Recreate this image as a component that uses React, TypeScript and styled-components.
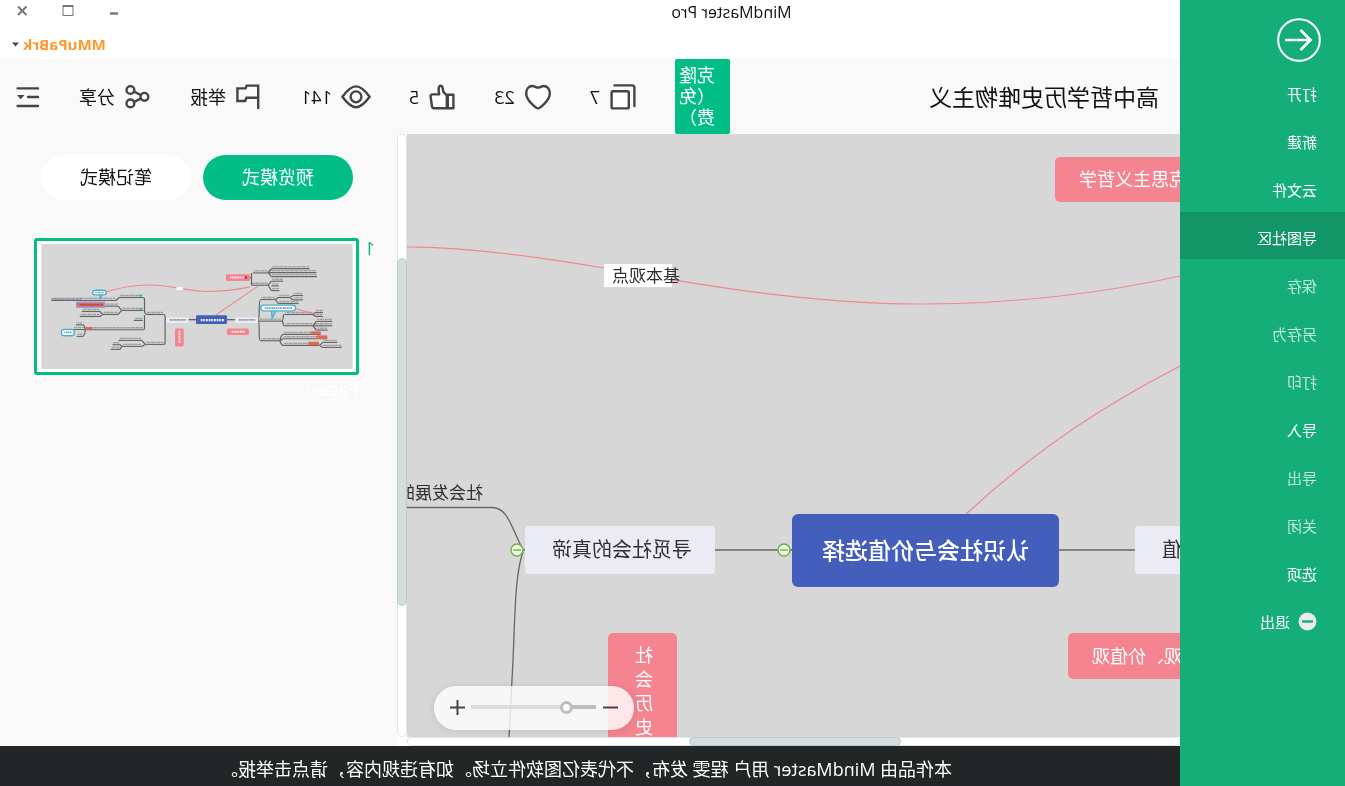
import React from 'react';
import styled, { createGlobalStyle, css } from 'styled-components';

const GlobalStyle = createGlobalStyle`
  * { box-sizing: border-box; }
  html, body { margin: 0; padding: 0; overflow-x: hidden; }
  body {
    font-family: "Open Sans", "Noto Sans CJK SC", sans-serif;
    font-size: 18px;
    color: #111;
    background: #fff;
    text-spacing-trim: space-all;
  }
  button { font: inherit; color: inherit; border: 0; padding: 0; background: none; cursor: pointer; }
  h1, h2, p, ul { margin: 0; padding: 0; font-weight: 400; }
  svg { display: block; flex: none; }
`;

/* The window is shown flipped left to right. */
const Window = styled.div`
  display: grid;
  grid-template-columns: 165px minmax(0, 1fr);
  min-height: 100vh;
  transform: scaleX(-1);
`;

const Sidebar = styled.nav`
  display: flex;
  flex-direction: column;
  background: #15ae79;
  color: #fff;
`;

const BackButton = styled.button`
  width: 44px;
  height: 44px;
  margin: 18px 0 6px 24px;
`;

const MenuItem = styled.button<{ $active?: boolean; $muted?: boolean }>`
  display: flex;
  align-items: center;
  gap: 8px;
  height: 47px;
  margin-bottom: 1px;
  padding: 4px 0 0 28px;
  font-size: 15px;
  text-align: left;
  color: ${(p) => (p.$muted ? 'rgba(255, 255, 255, 0.72)' : '#fff')};
  background: ${(p) => (p.$active ? '#129667' : 'transparent')};
`;

const Column = styled.div`
  display: flex;
  flex-direction: column;
  min-width: 0;
`;

const TitleBar = styled.header`
  display: flex;
  height: 59px;
  background: #fff;
`;

const AppName = styled.h1`
  flex: 1;
  padding-top: 1px;
  font-size: 16px;
  line-height: 22px;
  text-align: center;
`;

const WindowSide = styled.div`
  display: flex;
  flex-direction: column;
  align-items: flex-end;
  justify-content: space-between;
  width: 283px;
  padding: 3px 12px 5px 0;
`;

const WindowControls = styled.div`
  display: flex;
  gap: 30px;
  padding-right: 2px;
`;

const UserButton = styled.button`
  display: flex;
  align-items: center;
  gap: 4px;
  font-size: 15px;
  font-weight: 700;
  line-height: 20px;
  color: #ff9a2e;
`;

const Toolbar = styled.div`
  display: flex;
  align-items: center;
  gap: 38px;
  height: 75px;
  padding: 0 13px 0 21px;
  background: #f9f9f9;
`;

const DocTitle = styled.h2`
  flex: 1;
  font-size: 23px;
  line-height: 32px;
  white-space: nowrap;
`;

const CloneButton = styled.button`
  align-self: stretch;
  width: 55px;
  padding: 0 4px 0 15px;
  border-radius: 2px;
  background: #02be86;
  color: #fff;
  line-height: 21px;
  text-align: left;
`;

const Stat = styled.button`
  display: flex;
  align-items: center;
  gap: 9px;
  line-height: 26px;
  white-space: nowrap;
`;

const Workspace = styled.div`
  flex: 1;
  display: grid;
  grid-template-columns: minmax(0, 1fr) 10px 397px;
  grid-template-rows: minmax(0, 1fr) 9px;
  background: #fff;
`;

const Canvas = styled.main`
  position: relative;
  overflow: hidden;
  background: #d7d7d7;
  color: #303030;
`;

const Links = styled.svg`
  position: absolute;
  left: 0;
  top: 0;
  fill: none;
`;

type Tone = 'root' | 'plain' | 'pink';
const tones = {
  root: css`background: #435fbb; color: #fff; font-size: 23px; font-weight: 500; border-radius: 6px;`,
  plain: css`background: #eaebf4; color: #303030; font-size: 20px; border-radius: 4px; padding-right: 4px;`,
  pink: css`background: #f48590; color: #fff; font-size: 18px; border-radius: 5px;`,
};

const Node = styled.div<{ $x: number; $y: number; $w: number; $h: number; $tone: Tone }>`
  position: absolute;
  left: ${(p) => p.$x}px;
  top: ${(p) => p.$y}px;
  width: ${(p) => p.$w}px;
  height: ${(p) => p.$h}px;
  display: flex;
  align-items: center;
  justify-content: center;
  padding-bottom: 3px;
  white-space: nowrap;
  ${(p) => tones[p.$tone]}
`;

const TallNode = styled(Node)`
  align-items: flex-start;
  padding: 10px 24px 0;
  line-height: 24px;
  white-space: normal;
`;

const LinkLabel = styled.div`
  position: absolute;
  left: 508px;
  top: 130px;
  width: 68px;
  height: 23px;
  background: #fff;
  font-size: 17px;
  line-height: 24px;
  white-space: nowrap;
  direction: rtl;
  padding-right: 8px;
`;

const BranchLabel = styled.div`
  position: absolute;
  left: 697px;
  top: 347px;
  font-size: 17px;
  line-height: 24px;
  white-space: nowrap;
`;

const ZoomBar = styled.div`
  position: absolute;
  right: 27px;
  bottom: 7px;
  display: flex;
  align-items: center;
  justify-content: space-between;
  width: 200px;
  height: 44px;
  padding: 0 16px 2px;
  border-radius: 22px;
  background: rgba(255, 255, 255, 0.8);
  box-shadow: 0 1px 8px rgba(0, 0, 0, 0.1);
`;

const ZoomRange = styled.input`
  appearance: none;
  width: 125px;
  height: 14px;
  margin: 0;
  background: linear-gradient(90deg, #bdbdbd 24%, #dcdcdc 24%) center / 100% 4px no-repeat;
  &::-webkit-slider-thumb {
    appearance: none;
    width: 13px;
    height: 13px;
    border: 3px solid #bdbdbd;
    border-radius: 50%;
    background: #fff;
  }
`;

const Track = styled.div<{ $vertical?: boolean }>`
  display: flex;
  flex-direction: ${(p) => (p.$vertical ? 'column' : 'row')};
  border-radius: 5px;
  background: #fff;
  box-shadow: inset 0 0 0 1px #e3e3e3;
`;

const Space = styled.span<{ $grow: number }>`
  flex: ${(p) => p.$grow} 0 0;
`;

const Thumb = styled(Space)`
  border: 1px solid #bccaca;
  border-radius: 5px;
  background: #d4dede;
`;

const Panel = styled.aside`
  grid-column: 3;
  grid-row: 1 / span 2;
  padding: 21px 34px 0 22px;
  background: #f9f9f9;
`;

const Modes = styled.div`
  display: flex;
  gap: 12px;
  padding-left: 22px;
`;

const ModeButton = styled.button<{ $on?: boolean }>`
  width: 150px;
  height: 45px;
  border-radius: 23px;
  line-height: 45px;
  background: ${(p) => (p.$on ? '#02be86' : '#fff')};
  color: ${(p) => (p.$on ? '#fff' : '#111')};
`;

const PageRow = styled.div`
  display: grid;
  grid-template-columns: 16px 325px;
  margin-top: 38px;
`;

const PageNumber = styled.span`
  color: #15ae79;
  line-height: 20px;
`;

const PageFrame = styled.button`
  display: flex;
  border: 3px solid #02be86;
  border-radius: 3px;
  padding: 3px 4px 3px 3px;
  background: #fff;
`;

const PageName = styled.span`
  grid-column: 2;
  padding-top: 1px;
  line-height: 26px;
  color: #fff;
`;

const Notice = styled.footer`
  display: flex;
  align-items: center;
  justify-content: center;
  height: 40px;
  padding: 6px 0 0 8px;
  background: #222627;
  color: #fff;
  font-size: 18px;
  line-height: 24px;
`;

const ink = { fill: 'none', stroke: '#444', strokeWidth: 2.4, strokeLinejoin: 'round' as const, strokeLinecap: 'round' as const };

const CopyIcon = () => (
  <svg width="28" height="28" {...ink}>
    <rect x="8.2" y="8.2" width="17.2" height="17.2" rx="1.5" fill="#fff" />
    <path d="M22.5 2.4H5Q2.6 2.4 2.6 4.8V23" />
  </svg>
);
const HeartIcon = () => (
  <svg width="28" height="28" {...ink}>
    <path fill="#fff" d="M14 25.4C12.6 25.4 2.2 17.6 2.2 10.4C2.2 6 4.8 3 8.4 3C10.4 3 12 4.6 14 4.6S17.6 3 19.6 3C23.2 3 25.8 6 25.8 10.4C25.8 17.6 15.4 25.4 14 25.4Z" />
  </svg>
);
const LikeIcon = () => (
  <svg width="28" height="28" {...ink}>
    <rect x="2.6" y="11.8" width="5.6" height="13.4" fill="#fff" />
    <path fill="#fff" d="M9.2 12.4L12.4 9.2C13.4 8 12.6 2.8 15.2 2.8C18 2.8 17.6 8 16.8 11.4H23.4Q25.6 11.4 25.4 13.6L24 23.6Q23.6 25.2 22 25.2H9.2Z" />
  </svg>
);
const EyeIcon = () => (
  <svg width="30" height="28" {...ink}>
    <path d="M1.4 13.8C7 6 10.6 3.4 15 3.4S23 6 28.6 13.8C23 21.6 19.4 24.2 15 24.2S7 21.6 1.4 13.8Z" />
    <circle cx="15" cy="13.8" r="5.4" />
  </svg>
);
const FlagIcon = () => (
  <svg width="28" height="28" {...ink} strokeLinejoin="miter" strokeLinecap="butt">
    <path d="M4.8 26V2.6H16.4L17.400 5.4H25.6V18H17.800L16.600 14.8H4.8" />
  </svg>
);
const ShareIcon = () => (
  <svg width="28" height="28" {...ink}>
    <circle cx="7.6" cy="13.8" r="3.9" />
    <circle cx="21.6" cy="7" r="3.9" />
    <circle cx="21.6" cy="20.4" r="3.9" />
    <path d="M11.2 12L18 8.6M11.2 15.6L18 18.8" />
  </svg>
);
const MenuIcon = () => (
  <svg width="28" height="28" {...ink}>
    <path d="M3 5.4H23.4M3 14H13M3 23H23.4" />
    <path d="M16.500 12H24L20.300 16.200Z" fill="#444" stroke="none" />
  </svg>
);

const Collapse = ({ x, y }: { x: number; y: number }) => (
  <g stroke="#6cb33f" strokeWidth="1.4">
    <circle cx={x} cy={y} r="6" fill="#eef8e8" />
    <path d={`M${x - 4} ${y}h8`} />
  </g>
);

/* Page preview: boxes are [x, y, width, height], branches are [x1, x2, y]. */
const branches = [
  [254, 300, 87], [129, 244, 74], [109, 254, 86], [107, 244, 98],
  [254, 304, 124], [209, 244, 112], [222, 244, 126], [220, 244, 140],
  [568, 621, 212], [630, 702, 161], [629, 695, 200], [631, 658, 230], [629, 804, 258],
  [712, 906, 170], [705, 746, 187], [705, 752, 212], [760, 815, 203], [760, 821, 218],
  [812, 832, 243], [804, 840, 257], [812, 830, 278],
  [568, 624, 302], [634, 704, 290], [634, 694, 308], [700, 722, 303], [700, 728, 317],
  [232, 276, 167], [214, 284, 232], [219, 276, 291], [189, 224, 161], [149, 179, 155],
  [149, 179, 168], [162, 224, 179], [119, 204, 212], [119, 204, 246], [89, 112, 206],
  [89, 112, 218], [61, 109, 233], [61, 119, 246], [75, 109, 259], [96, 209, 272],
  [76, 209, 285], [99, 209, 305], [46, 90, 296], [32, 92, 311],
];
const twigs =
  'M308 101H304M304 87V124M254 86L244 74M254 86L244 98M254 124L244 112M254 124L244 140' +
  'M561 228Q564 228 564 222Q564 212 568 212M564 224V294Q564 302 568 302' +
  'M621 212Q626 208 626 200V168Q626 161 630 161M626 214V250Q626 258 629 258' +
  'M702 161L712 170M695 200L705 187M695 200L705 212M752 212L760 203M752 212L760 218' +
  'M804 257Q806 243 812 243M804 257Q806 278 812 278M624 302L634 290M624 302L634 308M694 308L700 303M694 308L700 317' +
  'M284 228Q281 226 281 200Q281 167 276 167M284 228Q281 230 281 270Q281 291 276 291' +
  'M232 167L224 161M232 167L224 179M189 161L179 155M189 161L179 168' +
  'M214 232Q208 230 209 220Q209 212 204 212M214 232Q208 234 209 240Q209 246 204 246' +
  'M119 212L112 206M119 212L112 218M119 246L109 233M119 246L109 259' +
  'M219 291Q214 272 209 272M219 291L209 285M219 291Q214 305 209 305M99 305L90 296M99 305L92 311';
const pinkBoxes = [[308, 91, 73, 20], [312, 254, 66, 20], [508, 254, 26, 54]];
const redBoxes = [[746, 175, 84, 15], [782, 250, 20, 8], [96, 263, 30, 9], [76, 275, 32, 10], [101, 294, 32, 10]];
const bubbles = [[741, 139, 41, 14], [837, 257, 39, 19], [172, 184, 104, 17]];

const Box = ({ b, rx = 0, ...rest }: { b: number[]; rx?: number } & React.SVGProps<SVGRectElement>) => (
  <rect x={b[0]} y={b[1]} width={b[2]} height={b[3]} rx={rx} {...rest} />
);

const Preview = () => (
  <svg width="312" height="125" viewBox="0 0 936 376" fill="none" role="img" aria-label="Page-1">
    <rect width="936" height="376" fill="#d7d7d7" />
    {branches.map(([a, b, y]) => (
      <g key={`${a}-${y}`}>
        <path d={`M${a} ${y}H${b}`} stroke="#666" strokeWidth="3.4" />
        <path d={`M${a + 2} ${y - 6}H${b - 2}`} stroke="#999" strokeWidth="4" strokeDasharray="7 2 4 1" />
      </g>
    ))}
    <path d={twigs} stroke="#5c5c5c" strokeWidth="3.4" />
    <path d="M353 228H378M471 228H494" stroke="#444" strokeWidth="3.4" />
    <path d="M309 129C360 140 400 143 439 143C480 143 500 136 524 133C560 126 600 122 634 124C680 126 710 134 744 145M412 214L284 126M172 194L106 213" stroke="#f2868f" strokeWidth="3.4" />
    <rect x="494" y="220" width="67" height="18" rx="3" fill="#eaebf4" />
    <rect x="284" y="220" width="69" height="18" rx="3" fill="#eaebf4" />
    <path d="M501 228H550M293 228H342M816 166H906" stroke="#8f91a0" strokeWidth="5" strokeDasharray="5 2 3 1" />
    <rect x="510" y="130" width="20" height="8" fill="#fff" />
    <rect x="378" y="214" width="93" height="27" rx="3" fill="#435fbb" />
    <path d="M387 229H458" stroke="#e3e7f6" strokeWidth="7" strokeDasharray="6 2" />
    {pinkBoxes.map((b) => <Box key={b.join()} b={b} rx={4} fill="#f48590" />)}
    <path d="M326 101H368M325 264H366M521 260V300" stroke="#fde3e5" strokeWidth="6" strokeDasharray="6 2" />
    <circle cx="321" cy="101" r="4" fill="#d9213a" />
    {redBoxes.map((b) => <Box key={b.join()} b={b} fill="#e8654f" />)}
    <rect x="746" y="175" width="84" height="15" stroke="#8f9bea" strokeWidth="4" />
    <path d="M752 183H822" stroke="#a03c30" strokeWidth="4" strokeDasharray="5 2" />
    <path d="M754 152L758 164L762 152M230 200L242 223L244 200" stroke="#45b1d3" strokeWidth="4" fill="#8fd0e4" />
    {bubbles.map((b) => <Box key={b.join()} b={b} rx={8} fill="#fff" stroke="#45b1d3" strokeWidth="4" />)}
    <path d="M749 146H774M846 266H868M182 193H266" stroke="#7b99a5" strokeWidth="5" strokeDasharray="5 2 3 1" />
    <path d="M635 152h6v6h-6zM635 193h6v6h-6z" fill="#27b3b8" />
  </svg>
);

const menu = [
  { label: '打开' }, { label: '新建' }, { label: '云文件' }, { label: '导图社区', active: true },
  { label: '保存', muted: true }, { label: '另存为', muted: true }, { label: '打印', muted: true },
  { label: '导入' }, { label: '导出', muted: true }, { label: '关闭', muted: true }, { label: '选项' },
];

const stats = [
  { name: '复制', Icon: CopyIcon, text: '7' },
  { name: '收藏', Icon: HeartIcon, text: '23' },
  { name: '点赞', Icon: LikeIcon, text: '5' },
  { name: '浏览', Icon: EyeIcon, text: '141' },
  { name: '举报', Icon: FlagIcon, text: '举报' },
  { name: '分享', Icon: ShareIcon, text: '分享' },
];

export default function App() {
  return (
    <>
      <GlobalStyle />
      <Window>
        <Sidebar>
          <BackButton aria-label="返回">
            <svg width="44" height="44" fill="none" stroke="#fff" strokeWidth="2">
              <circle cx="22" cy="22" r="20.8" />
              <path d="M36 22H11M20.5 12L10.5 22L20.5 32" strokeWidth="2.6" />
            </svg>
          </BackButton>
          {menu.map((m) => (
            <MenuItem key={m.label} $active={m.active} $muted={m.muted}>{m.label}</MenuItem>
          ))}
          <MenuItem>
            <svg width="19" height="19">
              <circle cx="9.5" cy="9.5" r="9" fill="#ececec" />
              <path d="M4 9.5H15" stroke="#15ae79" strokeWidth="2.4" />
            </svg>
            退出
          </MenuItem>
        </Sidebar>
        <Column>
          <TitleBar>
            <AppName>MindMaster Pro</AppName>
            <WindowSide>
              <WindowControls>
                <button aria-label="最小化">
                  <svg width="16" height="16"><path d="M4 10.5H12" stroke="#777" strokeWidth="2.4" /></svg>
                </button>
                <button aria-label="最大化">
                  <svg width="16" height="16" fill="none" stroke="#777"><path d="M3 3.5H13V12.5H3Z" /><path d="M2.5 3H13.5" strokeWidth="2" /></svg>
                </button>
                <button aria-label="关闭窗口">
                  <svg width="16" height="16"><path d="M3.5 3.5L12 12M12 3.5L3.5 12" stroke="#777" strokeWidth="2" /></svg>
                </button>
              </WindowControls>
              <UserButton>
                MMuPaBrk
                <svg width="7" height="5"><path d="M0 0.5H7L3.5 4.5Z" fill="#444a5c" /></svg>
              </UserButton>
            </WindowSide>
          </TitleBar>
          <Toolbar>
            <DocTitle>高中哲学历史唯物主义</DocTitle>
            <CloneButton>克隆（免费）</CloneButton>
            {stats.map(({ name, Icon, text }) => (
              <Stat key={name} title={name}><Icon />{text}</Stat>
            ))}
            <Stat aria-label="菜单"><MenuIcon /></Stat>
          </Toolbar>
          <Workspace>
            <Canvas>
              <Links width="774" height="604">
                <g stroke="#f2868f" strokeWidth="1.2">
                  <path d="M0 142C90 162 175 170 260 170C370 170 480 151 576 134C640 123 710 113 774 113" />
                  <path d="M0 232C70 268 140 312 214 380" />
                </g>
                <g stroke="#666" strokeWidth="1.3">
                  <path d="M45 416H121M388 416H465M655 416H663" />
                  <path d="M657 416C670 390 673 373.500 688 373.500H774" />
                  <path d="M657 418C665 440 665 480 667 526L671 604" />
                </g>
              </Links>
              <Node $tone="pink" $x={-49} $y={23} $w={174} $h={45}>马克思主义哲学</Node>
              <LinkLabel>基本观点</LinkLabel>
              <BranchLabel>社会发展的</BranchLabel>
              <Node $tone="plain" $x={-145} $y={392} $w={190} $h={48}>价值与人生价值</Node>
              <Node $tone="root" $x={121} $y={380} $w={267} $h={73}>认识社会与价值选择</Node>
              <Node $tone="plain" $x={465} $y={392} $w={190} $h={48}>寻觅社会的真谛</Node>
              <Node $tone="pink" $x={-134} $y={499} $w={246} $h={46}>世界观、人生观、价值观</Node>
              <TallNode $tone="pink" $x={503} $y={499} $w={69} $h={120}>社会历史</TallNode>
              <Links width="774" height="604">
                <Collapse x={396} y={416} />
                <Collapse x={663} y={416} />
              </Links>
              <ZoomBar>
                <button aria-label="缩小">
                  <svg width="15" height="15"><path d="M0 7.500H15" stroke="#444" strokeWidth="2" /></svg>
                </button>
                <ZoomRange type="range" min="0" max="100" defaultValue="21" aria-label="缩放" />
                <button aria-label="放大">
                  <svg width="15" height="15"><path d="M0 7.500H15M7.500 0V15" stroke="#444" strokeWidth="2" /></svg>
                </button>
              </ZoomBar>
            </Canvas>
            <Track $vertical>
              <Space $grow={124} /><Thumb $grow={348} /><Space $grow={131} />
            </Track>
            <Panel>
              <Modes>
                <ModeButton $on>预览模式</ModeButton>
                <ModeButton>笔记模式</ModeButton>
              </Modes>
              <PageRow>
                <PageNumber>1</PageNumber>
                <PageFrame aria-label="Page-1"><Preview /></PageFrame>
                <PageName>Page-1</PageName>
              </PageRow>
            </Panel>
            <Track>
              <Space $grow={280} /><Thumb $grow={210} /><Space $grow={283} />
            </Track>
          </Workspace>
          <Notice>
            <p>本作品由 MindMaster 用户 程雯 发布，不代表亿图软件立场。如有违规内容，请点击举报。</p>
          </Notice>
        </Column>
      </Window>
    </>
  );
}
